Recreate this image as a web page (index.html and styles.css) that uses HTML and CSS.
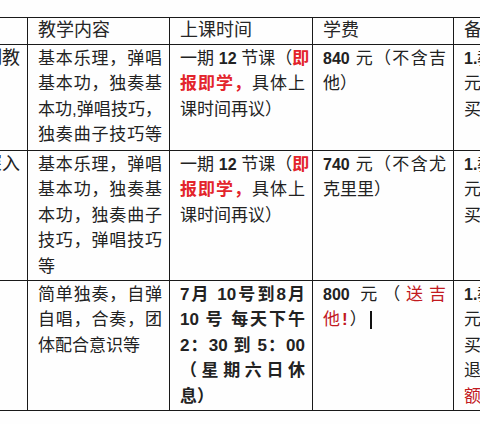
FILE: index.html
```html
<!DOCTYPE html>
<html lang="zh-CN">
<head>
<meta charset="utf-8">
<title>课程安排</title>
<link rel="stylesheet" href="styles.css">
</head>
<body>
<div class="frame">
  <table class="fees">
    <colgroup>
      <col class="c1"><col class="c2"><col class="c3"><col class="c4"><col class="c5">
    </colgroup>
    <thead>
      <tr class="rh">
        <th>课程</th><th>教学内容</th><th>上课时间</th><th>学费</th><th>备注</th>
      </tr>
    </thead>
    <tbody>
      <tr class="r1">
        <td class="name"><span class="ln">一对一制教</span></td>
        <td>
          <span class="ln j">基本乐理，弹唱</span>
          <span class="ln j">基本功，独奏基</span>
          <span class="ln j">本功,弹唱技巧，</span>
          <span class="ln j">独奏曲子技巧等</span>
        </td>
        <td>
          <span class="ln j">一期 <b>12</b> 节课（<em class="hot">即</em></span>
          <span class="ln j"><em class="hot">报即学，</em>具体上</span>
          <span class="ln">课时间再议）</span>
        </td>
        <td>
          <span class="ln j"><b>840</b> 元（不含吉</span>
          <span class="ln">他）</span>
        </td>
        <td>
          <span class="ln"><b>1.</b>教材费另计</span>
          <span class="ln">元，乐器可自</span>
          <span class="ln">买</span>
        </td>
      </tr>
      <tr class="r2">
        <td class="name name-in"><span class="ln">进阶深入</span></td>
        <td>
          <span class="ln j">基本乐理，弹唱</span>
          <span class="ln j">基本功，独奏基</span>
          <span class="ln j">本功，独奏曲子</span>
          <span class="ln j">技巧，弹唱技巧</span>
          <span class="ln">等</span>
        </td>
        <td>
          <span class="ln j">一期 <b>12</b> 节课（<em class="hot">即</em></span>
          <span class="ln j"><em class="hot">报即学，</em>具体上</span>
          <span class="ln">课时间再议）</span>
        </td>
        <td>
          <span class="ln j"><b>740</b> 元（不含尤</span>
          <span class="ln">克里里）</span>
        </td>
        <td>
          <span class="ln"><b>1.</b>教材费另计</span>
          <span class="ln">元，乐器可自</span>
          <span class="ln">买</span>
        </td>
      </tr>
      <tr class="r3">
        <td class="name name-left"><span class="ln">暑期班</span></td>
        <td>
          <span class="ln j">简单独奏，自弹</span>
          <span class="ln j">自唱，合奏，团</span>
          <span class="ln">体配合意识等</span>
        </td>
        <td class="strong">
          <span class="ln j">7月 10号到8月</span>
          <span class="ln j">10 号 每天下午</span>
          <span class="ln j">2：30 到 5：00</span>
          <span class="ln j">（星期六日休</span>
          <span class="ln">息）</span>
        </td>
        <td>
          <span class="ln j"><b>800</b> 元（<span class="gift">送吉</span></span>
          <span class="ln"><span class="gift">他<b class="bang">!</b></span>）<span class="caret"></span></span>
        </td>
        <td>
          <span class="ln"><b>1.</b>教材费另计</span>
          <span class="ln">元，乐器可自</span>
          <span class="ln">买，中途不可</span>
          <span class="ln">退费，报满</span>
          <span class="ln"><span class="gift">额满为止</span></span>
        </td>
      </tr>
    </tbody>
  </table>
</div>
</body>
</html>
```

FILE: styles.css
```css
html, body {
  margin: 0;
  padding: 0;
  background: #ffffff;
}

.frame {
  width: 480px;
  height: 424px;
  overflow: hidden;
  padding-top: 17px;
  box-sizing: border-box;
  background: #fefefe;
}

.fees {
  margin-left: -115px;
  border-collapse: collapse;
  table-layout: fixed;
  width: 710px;
  font-family: "Liberation Sans", "Noto Sans CJK SC", sans-serif;
  font-size: 17px;
  line-height: 25.6px;
  color: #222222;
}

.c1 { width: 142px; }
.c2 { width: 142px; }
.c3 { width: 143px; }
.c4 { width: 141px; }
.c5 { width: 142px; }

.fees th,
.fees td {
  border: 1px solid #1a1a1a;
  padding: 1px 7px 0 10px;
  vertical-align: top;
  text-align: left;
  overflow: hidden;
}

.fees th {
  font-size: 18px;
  font-weight: normal;
  vertical-align: middle;
  padding-top: 0;
  padding-bottom: 0;
  color: #262626;
}

.rh { height: 26px; }
.r1 { height: 106px; }
.r2 { height: 130px; }
.r3 { height: 130px; }

.ln {
  display: block;
  white-space: nowrap;
}

.j {
  text-align: justify;
  text-align-last: justify;
}

.name {
  font-size: 18px;
  padding-right: 3px;
}

.name .ln {
  text-align: right;
}

.name-in {
  padding-right: 6px;
}

.name-left .ln {
  text-align: left;
}

.fees b {
  font-weight: bold;
  font-size: 16px;
}

.strong {
  font-weight: bold;
}

.hot {
  font-style: normal;
  font-weight: bold;
  color: #e3242b;
}

.gift {
  color: #c21a1f;
}

.fees .bang {
  font-size: 17px;
  margin: 0 2px;
}

.caret {
  display: inline-block;
  width: 2px;
  height: 18px;
  margin-left: 3px;
  background: #111111;
  vertical-align: -4px;
}
```
